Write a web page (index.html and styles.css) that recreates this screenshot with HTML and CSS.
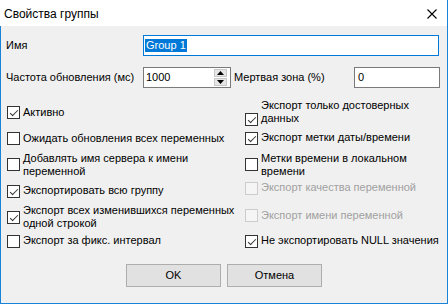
FILE: index.html
```html
<!DOCTYPE html>
<html>
<head>
<meta charset="utf-8">
<link rel="stylesheet" href="styles.css">
</head>
<body>
<div class="window">
  <div class="titlebar">
    <span class="title">Свойства группы</span>
    <svg class="close" width="10" height="10" viewBox="0 0 10 10"><path d="M0.5 0.5 L9.5 9.5 M9.5 0.5 L0.5 9.5" stroke="#000" stroke-width="1.1" fill="none"/></svg>
  </div>
  <div class="content">
    <div class="row row-name">
      <span class="label lbl1">Имя</span>
      <div class="input focused wide"><span class="sel">Group 1</span></div>
    </div>
    <div class="row row-freq">
      <span class="label lbl1">Частота обновления (мс)</span>
      <div class="input spin">
        <span class="val">1000</span>
        <div class="spinbtns">
          <div class="sb"><svg width="7" height="4" viewBox="0 0 7 4"><path d="M3.5 0 L7 4 L0 4 Z" fill="#000"/></svg></div>
          <div class="sb"><svg width="7" height="4" viewBox="0 0 7 4"><path d="M0 0 L7 0 L3.5 4 Z" fill="#000"/></svg></div>
        </div>
      </div>
      <span class="label lbl2">Мертвая зона (%)</span>
      <div class="input dz"><span class="val">0</span></div>
    </div>
    <div class="cols">
      <div class="col col-left">
        <div class="cb one m0"><span class="box on"></span><span class="txt">Активно</span></div>
        <div class="cb one m13"><span class="box"></span><span class="txt">Ожидать обновления всех переменных</span></div>
        <div class="cb two m7"><span class="box b6"></span><span class="txt">Добавлять имя сервера к имени<br>переменной</span></div>
        <div class="cb one m6"><span class="box on b1"></span><span class="txt">Экспортировать всю группу</span></div>
        <div class="cb two m7"><span class="box on b7"></span><span class="txt">Экспорт всех изменившихся переменных<br>одной строкой</span></div>
        <div class="cb one m4"><span class="box b1"></span><span class="txt">Экспорт за фикс. интервал</span></div>
      </div>
      <div class="col col-right">
        <div class="cb two m0"><span class="box on b14"></span><span class="txt">Экспорт только достоверных<br>данных</span></div>
        <div class="cb one m6"><span class="box on b1"></span><span class="txt">Экспорт метки даты/времени</span></div>
        <div class="cb two m8"><span class="box b6"></span><span class="txt">Метки времени в локальном<br>времени</span></div>
        <div class="cb one m3 dis"><span class="box b1"></span><span class="txt">Экспорт качества переменной</span></div>
        <div class="cb one m15 dis"><span class="box"></span><span class="txt">Экспорт имени переменной</span></div>
        <div class="cb one m12"><span class="box on b1"></span><span class="txt">Не экспортировать NULL значения</span></div>
      </div>
    </div>
    <div class="buttons">
      <div class="btn">OK</div>
      <div class="btn">Отмена</div>
    </div>
  </div>
</div>
</body>
</html>
```

FILE: styles.css
```css
* { box-sizing: border-box; }
html, body { margin: 0; padding: 0; }
body {
  width: 448px;
  height: 304px;
  overflow: hidden;
  font-family: "Liberation Sans", Arial, sans-serif;
  font-size: 11px;
  line-height: 13px;
  color: #000;
  background: #f0f0f0;
}
.window {
  width: 448px;
  height: 304px;
  display: flex;
  flex-direction: column;
}
.titlebar {
  height: 26px;
  flex: none;
  background: #fff;
  border-right: 1px solid #1883d7;
  display: flex;
  align-items: center;
  justify-content: space-between;
  padding-left: 4px;
  padding-right: 10px;
}
.title {
  font-size: 12px;
  line-height: 16px;
  margin-top: 1px;
}
.close { display: block; margin-top: 1px; }
.content {
  flex: 1;
  background: #f0f0f0;
  border: 1px solid #1883d7;
  border-top: none;
  padding-left: 5px;
  display: flex;
  flex-direction: column;
}
.row {
  display: flex;
  align-items: center;
  height: 21px;
}
.row-name { margin-top: 9px; }
.row-freq { margin-top: 11px; }
.label { white-space: nowrap; }
.lbl1 { width: 137px; flex: none; }
.lbl2 { width: 120px; flex: none; margin-left: 3px; }
.input {
  height: 21px;
  background: #fff;
  border: 1px solid #7a7a7a;
  display: flex;
  align-items: center;
}
.input.focused { border-color: #0078d7; }
.wide { width: 296px; padding-left: 1px; }
.sel {
  background: #0078d7;
  color: #fff;
  padding: 0 1px 0 1px;
  line-height: 13px;
}
.val { padding-left: 2px; }
.spin {
  width: 88px;
  justify-content: space-between;
  padding-right: 3px;
}
.spinbtns {
  width: 13px;
  height: 17px;
  display: flex;
  flex-direction: column;
  gap: 1px;
}
.sb {
  flex: 1;
  background: #e6e6e6;
  border: 1px solid #c8c8c8;
  display: flex;
  align-items: center;
  justify-content: center;
}
.sb svg { display: block; }
.dz { width: 86px; padding-left: 1px; }
.cols {
  display: flex;
  align-items: flex-start;
  margin-top: 11px;
}
.col { display: flex; flex-direction: column; }
.col-left { width: 239px; padding-left: 1px; padding-top: 7px; }
.cb {
  display: flex;
  align-items: flex-start;
  gap: 3px;
  white-space: nowrap;
}
.one { height: 13px; }
.two { height: 26px; }
.m0 { margin-top: 0; }
.m3 { margin-top: 3px; }
.m4 { margin-top: 4px; }
.m6 { margin-top: 6px; }
.m7 { margin-top: 7px; }
.m8 { margin-top: 8px; }
.m12 { margin-top: 12px; }
.m13 { margin-top: 13px; }
.m15 { margin-top: 15px; }
.box {
  width: 13px;
  height: 13px;
  flex: none;
  border: 1px solid #333;
  background: #fff;
  position: relative;
}
.b1 { margin-top: 1px; }
.b6 { margin-top: 6px; }
.b7 { margin-top: 7px; }
.b14 { margin-top: 14px; }
.box.on::after {
  content: "";
  position: absolute;
  left: 3px;
  top: 0px;
  width: 3px;
  height: 7px;
  border-right: 1px solid #333;
  border-bottom: 1px solid #333;
  transform: rotate(45deg);
  transform-origin: center;
  left: 4px;
  top: 1px;
}
.dis .box { border-color: #cccccc; background: #f5f5f5; }
.dis .txt { color: #a0a0a0; }
.buttons {
  display: flex;
  justify-content: center;
  gap: 6px;
  margin-top: 17px;
  margin-left: -5px;
}
.btn {
  width: 95px;
  height: 23px;
  background: #e1e1e1;
  border: 1px solid #adadad;
  display: flex;
  align-items: center;
  justify-content: center;
}
```
